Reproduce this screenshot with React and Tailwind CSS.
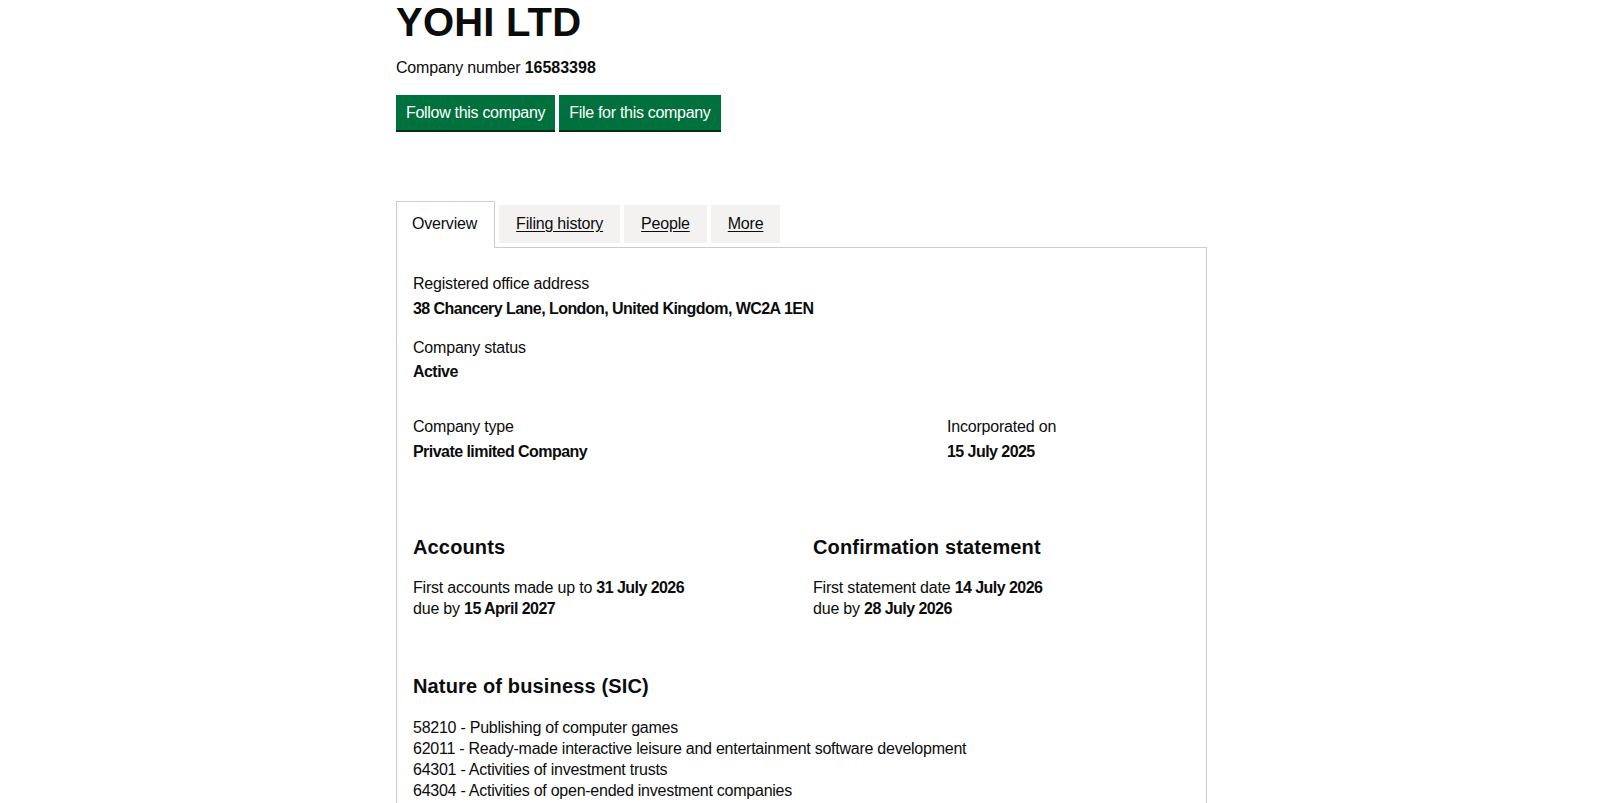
export default function App() {
  const bold = "font-bold tracking-[-0.55px]";
  const h2 = "text-[20px] leading-[25px] font-bold tracking-[0.15px]";
  return (
    <div className="min-h-[803px] bg-white text-[#0b0c0c] font-['Liberation_Sans',Arial,sans-serif] text-[16px] leading-[20px] tracking-[-0.2px]">
      <div className="ml-[396px] w-[811px] pt-[2px]">
        <h1 className="text-[40px] leading-[40px] font-bold tracking-[0.2px]">YOHI LTD</h1>
        <p className="mt-[16px]">
          Company number <strong className="font-bold tracking-normal">16583398</strong>
        </p>
        <div className="mt-[17px] flex gap-[4px]">
          <button className="h-[35px] px-[10px] bg-[#00703c] text-white tracking-[-0.3px] shadow-[0_2px_0_#002d18]">
            Follow this company
          </button>
          <button className="h-[35px] px-[10px] bg-[#00703c] text-white tracking-[-0.3px] shadow-[0_2px_0_#002d18]">
            File for this company
          </button>
        </div>

        <div className="mt-[71px] flex items-end border-b border-[#cccccc]">
          <div className="-mb-px border border-b-0 border-[#cccccc] bg-white pl-[15px] pr-[17px] pt-[12px] pb-[14px]">
            Overview
          </div>
          <div className="mb-[4px] ml-[4px] bg-[#f3f2f1] px-[17px] pt-[9px] pb-[9px]">
            <span className="underline underline-offset-[2px]">Filing history</span>
          </div>
          <div className="mb-[4px] ml-[4px] bg-[#f3f2f1] px-[17px] pt-[9px] pb-[9px]">
            <span className="underline underline-offset-[2px]">People</span>
          </div>
          <div className="mb-[4px] ml-[4px] bg-[#f3f2f1] px-[17px] pt-[9px] pb-[9px]">
            <span className="underline underline-offset-[2px]">More</span>
          </div>
        </div>

        <div className="border-x border-[#cccccc] pl-[16px] pr-[16px] pt-[26px] pb-[40px]">
          <div>
            <p>Registered office address</p>
            <p className={"mt-[5px] " + bold}>38 Chancery Lane, London, United Kingdom, WC2A 1EN</p>
          </div>
          <div className="mt-[19px]">
            <p>Company status</p>
            <p className={"mt-[4px] " + bold}>Active</p>
          </div>
          <div className="mt-[35px] grid grid-cols-[534px_1fr]">
            <div>
              <p>Company type</p>
              <p className={"mt-[5px] " + bold}>Private limited Company</p>
            </div>
            <div>
              <p>Incorporated on</p>
              <p className={"mt-[5px] " + bold}>15 July 2025</p>
            </div>
          </div>

          <div className="mt-[73px] grid grid-cols-[400px_1fr]">
            <div>
              <h2 className={h2}>Accounts</h2>
              <div className="mt-[17px] leading-[21px]">
                <p>
                  First accounts made up to <strong className={bold}>31 July 2026</strong>
                </p>
                <p>
                  due by <strong className={bold}>15 April 2027</strong>
                </p>
              </div>
            </div>
            <div>
              <h2 className={h2}>Confirmation statement</h2>
              <div className="mt-[17px] leading-[21px]">
                <p>
                  First statement date <strong className={bold}>14 July 2026</strong>
                </p>
                <p>
                  due by <strong className={bold}>28 July 2026</strong>
                </p>
              </div>
            </div>
          </div>

          <h2 className={"mt-[55px] " + h2}>Nature of business (SIC)</h2>
          <ul className="mt-[18px] leading-[21px] tracking-[-0.25px]">
            <li>58210 - Publishing of computer games</li>
            <li>62011 - Ready-made interactive leisure and entertainment software development</li>
            <li>64301 - Activities of investment trusts</li>
            <li>64304 - Activities of open-ended investment companies</li>
          </ul>
        </div>
      </div>
    </div>
  );
}
